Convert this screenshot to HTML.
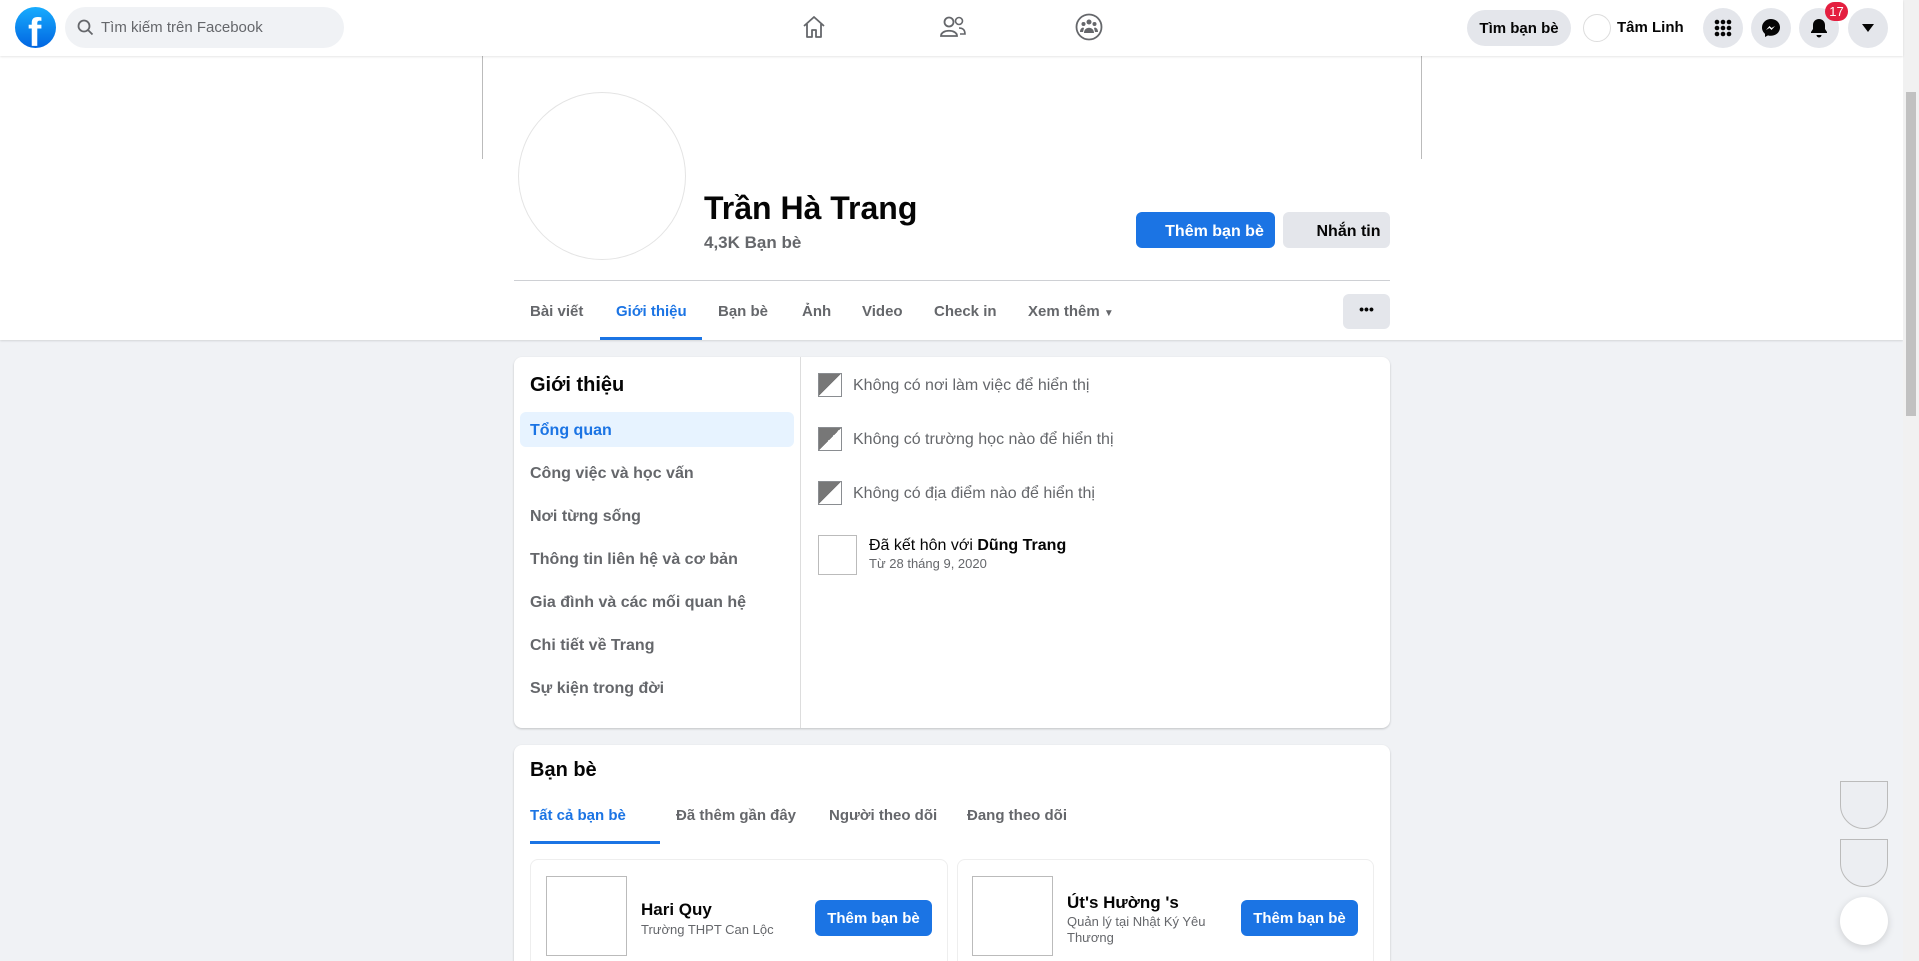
<!DOCTYPE html>
<html style="overflow:hidden;height:961px"><head><meta charset="utf-8"><style>
*{box-sizing:border-box;margin:0;padding:0}
html{overflow:hidden;height:961px}
body{width:1919px;height:961px;overflow:hidden;background:#f0f2f5;font-family:"Liberation Sans",Arial,sans-serif;position:relative;color:#050505}
.a{position:absolute}
.top{left:0;top:0;width:1903px;height:56px;background:#fff;box-shadow:0 1px 2px rgba(0,0,0,.1);z-index:5}
.hdr{left:0;top:56px;width:1903px;height:284px;background:#fff;box-shadow:0 1px 2px rgba(0,0,0,.12)}
.circ{width:40px;height:40px;border-radius:50%;background:#e4e6eb;display:flex;align-items:center;justify-content:center}
.tab{top:298px;font-size:15px;font-weight:bold;color:#65676b}
.card{background:#fff;border-radius:8px;box-shadow:0 1px 2px rgba(0,0,0,.2)}
.mi{left:530px;font-size:16px;font-weight:bold;color:#65676b}
.ri{left:853px;font-size:16px;color:#65676b}
.bi{width:24px;height:24px;border:1px solid #8a8d91;background:linear-gradient(135deg,#777 0 50%,#fff 50%)}
.btn{background:#1b74e4;color:#fff;font-weight:bold;font-size:16px;border-radius:6px;display:flex;align-items:center;justify-content:center}
.brk{border:1px solid #bbb;background:#fff}
</style></head><body>
<div class="a top">
 <div class="a" style="left:15px;top:7px;width:41px;height:41px;border-radius:50%;background:linear-gradient(#18acfe,#0165e1);overflow:hidden"><span class="a" style="left:13px;top:6px;color:#fff;font-size:40px;font-weight:bold;font-family:'Liberation Sans';line-height:40px">f</span></div>
 <div class="a" style="left:65px;top:7px;width:279px;height:41px;border-radius:21px;background:#f0f2f5">
  <svg class="a" style="left:12px;top:12px" width="17" height="17" viewBox="0 0 17 17"><circle cx="7" cy="7" r="5.5" fill="none" stroke="#65676b" stroke-width="1.8"/><line x1="11" y1="11" x2="15.5" y2="15.5" stroke="#65676b" stroke-width="1.8"/></svg>
  <span class="a" style="left:36px;top:12px;font-size:15px;color:#65676b">Tìm kiếm trên Facebook</span></div>
 <svg class="a" style="left:801px;top:14px" width="26" height="26" viewBox="0 0 26 26"><path d="M3 12 L13 3 L23 12 M6 10 V23 H11 V16 H15 V23 H20 V10" fill="none" stroke="#65676b" stroke-width="1.8" stroke-linejoin="round"/></svg>
 <svg class="a" style="left:939px;top:14px" width="28" height="26" viewBox="0 0 28 26"><circle cx="10" cy="8" r="4.5" fill="none" stroke="#65676b" stroke-width="1.8"/><path d="M2 22 C2 15 18 15 18 22 Z" fill="none" stroke="#65676b" stroke-width="1.8"/><circle cx="20" cy="7" r="3.5" fill="none" stroke="#65676b" stroke-width="1.6"/><path d="M20 14 C24 14 26 16 26 20 H21" fill="none" stroke="#65676b" stroke-width="1.6"/></svg>
 <svg class="a" style="left:1075px;top:13px" width="28" height="28" viewBox="0 0 28 28"><circle cx="14" cy="14" r="12.5" fill="none" stroke="#65676b" stroke-width="1.8"/><circle cx="14" cy="9" r="2.5" fill="#65676b"/><circle cx="8.5" cy="11" r="2" fill="#65676b"/><circle cx="19.5" cy="11" r="2" fill="#65676b"/><path d="M9 20 C9 13 19 13 19 20 Z M5 19 C5 15 8 14 9 15 L8 19Z M23 19 C23 15 20 14 19 15 L20 19Z" fill="#65676b"/></svg>
 <div class="a" style="left:1467px;top:10px;width:104px;height:36px;border-radius:18px;background:#e4e6eb;font-size:15px;font-weight:bold;display:flex;align-items:center;justify-content:center">Tìm bạn bè</div>
 <div class="a" style="left:1583px;top:14px;width:28px;height:28px;border-radius:50%;border:1px solid #ddd"></div>
 <span class="a" style="left:1617px;top:19px;font-size:15px;font-weight:bold">Tâm Linh</span>
 <div class="a circ" style="left:1703px;top:8px"><svg width="20" height="20" viewBox="0 0 20 20" fill="#050505"><circle cx="4" cy="4" r="2.3"/><circle cx="10" cy="4" r="2.3"/><circle cx="16" cy="4" r="2.3"/><circle cx="4" cy="10" r="2.3"/><circle cx="10" cy="10" r="2.3"/><circle cx="16" cy="10" r="2.3"/><circle cx="4" cy="16" r="2.3"/><circle cx="10" cy="16" r="2.3"/><circle cx="16" cy="16" r="2.3"/></svg></div>
 <div class="a circ" style="left:1751px;top:8px"><svg width="20" height="20" viewBox="0 0 20 20"><path d="M10 1C5 1 1 4.7 1 9.5c0 2.6 1.2 4.8 3 6.3V19l3-1.6c.9.3 1.9.4 3 .4 5 0 9-3.7 9-8.4S15 1 10 1z" fill="#050505"/><path d="M5 12l3.5-4 2 2 3.5-2-3.5 4-2-2z" fill="#fff"/></svg></div>
 <div class="a circ" style="left:1799px;top:8px"><svg width="18" height="20" viewBox="0 0 18 20"><path d="M9 1c-3.5 0-6 2.6-6 6v4l-2 3v1h16v-1l-2-3V7c0-3.4-2.5-6-6-6z M6.5 17h5a2.5 2.5 0 01-5 0z" fill="#050505"/></svg></div>
 <div class="a" style="left:1825px;top:2px;min-width:23px;height:19px;border-radius:10px;background:#e41e3f;color:#fff;font-size:13px;text-align:center;line-height:19px;padding:0 4px">17</div>
 <div class="a circ" style="left:1848px;top:8px"><svg width="12" height="8" viewBox="0 0 12 8"><path d="M0 0h12L6 8z" fill="#050505"/></svg></div>
</div>
<div class="a hdr">
 <div class="a" style="left:482px;top:0;width:1px;height:103px;background:#bbb"></div>
 <div class="a" style="left:1421px;top:0;width:1px;height:103px;background:#bbb"></div>
 <div class="a" style="left:518px;top:36px;width:168px;height:168px;border-radius:50%;border:1px solid #e4e4e4;background:#fff"></div>
 <div class="a" style="left:704px;top:134px;font-size:32px;font-weight:bold">Trần Hà Trang</div>
 <div class="a" style="left:704px;top:177px;font-size:17px;font-weight:bold;color:#65676b">4,3K Bạn bè</div>
 <div class="a btn" style="left:1136px;top:156px;width:139px;height:36px;padding-left:18px;padding-top:3px">Thêm bạn bè</div>
 <div class="a" style="left:1283px;top:156px;width:107px;height:36px;border-radius:6px;background:#e4e6eb;font-size:16px;font-weight:bold;display:flex;align-items:center;justify-content:center;padding-left:24px;padding-top:3px">Nhắn tin</div>
 <div class="a" style="left:514px;top:224px;width:876px;height:1px;background:#ced0d4"></div>
 <span class="a tab" style="left:530px;top:247px">Bài viết</span>
 <span class="a tab" style="left:616px;top:247px;color:#1b74e4">Giới thiệu</span>
 <div class="a" style="left:600px;top:281px;width:102px;height:3px;background:#1b74e4"></div>
 <span class="a tab" style="left:718px;top:247px">Bạn bè</span>
 <span class="a tab" style="left:802px;top:247px">Ảnh</span>
 <span class="a tab" style="left:862px;top:247px">Video</span>
 <span class="a tab" style="left:934px;top:247px">Check in</span>
 <span class="a tab" style="left:1028px;top:247px">Xem thêm <span style="font-size:10px">▼</span></span>
 <div class="a" style="left:1343px;top:238px;width:47px;height:35px;border-radius:6px;background:#e4e6eb;text-align:center;font-weight:bold;font-size:14px;line-height:30px">•••</div>
</div>
<div class="a card" style="left:514px;top:357px;width:876px;height:371px">
 <div class="a" style="left:286px;top:0;width:1px;height:371px;background:#ddd"></div>
 <div class="a" style="left:16px;top:17px;font-size:20px;font-weight:bold">Giới thiệu</div>
 <div class="a" style="left:6px;top:55px;width:274px;height:35px;border-radius:6px;background:#e7f3ff"></div>
</div>
<div class="a mi" style="top:422px;color:#1b74e4">Tổng quan</div>
<div class="a mi" style="top:465px">Công việc và học vấn</div>
<div class="a mi" style="top:508px">Nơi từng sống</div>
<div class="a mi" style="top:551px">Thông tin liên hệ và cơ bản</div>
<div class="a mi" style="top:594px">Gia đình và các mối quan hệ</div>
<div class="a mi" style="top:637px">Chi tiết về Trang</div>
<div class="a mi" style="top:680px">Sự kiện trong đời</div>
<div class="a bi" style="left:818px;top:373px"></div><div class="a ri" style="top:377px">Không có nơi làm việc để hiển thị</div>
<div class="a bi" style="left:818px;top:427px"></div><div class="a ri" style="top:431px">Không có trường học nào để hiển thị</div>
<div class="a bi" style="left:818px;top:481px"></div><div class="a ri" style="top:485px">Không có địa điểm nào để hiển thị</div>
<div class="a brk" style="left:818px;top:535px;width:39px;height:40px"></div>
<div class="a" style="left:869px;top:537px;font-size:16px">Đã kết hôn với <b>Dũng Trang</b></div>
<div class="a" style="left:869px;top:556px;font-size:13px;color:#65676b">Từ 28 tháng 9, 2020</div>
<div class="a card" style="left:514px;top:745px;width:876px;height:240px">
 <div class="a" style="left:16px;top:14px;font-size:20px;font-weight:bold">Bạn bè</div>
 <div class="a tab" style="left:16px;top:62px;color:#1b74e4">Tất cả bạn bè</div>
 <div class="a tab" style="left:162px;top:62px">Đã thêm gần đây</div>
 <div class="a tab" style="left:315px;top:62px">Người theo dõi</div>
 <div class="a tab" style="left:453px;top:62px">Đang theo dõi</div>
 <div class="a" style="left:16px;top:96px;width:130px;height:3px;background:#1b74e4"></div>
 <div class="a" style="left:16px;top:114px;width:418px;height:140px;border:1px solid #eee;border-radius:8px"></div>
 <div class="a" style="left:443px;top:114px;width:417px;height:140px;border:1px solid #eee;border-radius:8px"></div>
</div>
<div class="a brk" style="left:546px;top:876px;width:81px;height:80px"></div>
<div class="a" style="left:641px;top:900px;font-size:17px;font-weight:bold">Hari Quy</div>
<div class="a" style="left:641px;top:922px;font-size:13px;color:#65676b">Trường THPT Can Lộc</div>
<div class="a btn" style="left:815px;top:900px;width:117px;height:36px;font-size:15px">Thêm bạn bè</div>
<div class="a brk" style="left:972px;top:876px;width:81px;height:80px"></div>
<div class="a" style="left:1067px;top:893px;font-size:17px;font-weight:bold">Út's Hường 's</div>
<div class="a" style="left:1067px;top:914px;font-size:13px;color:#65676b;width:150px;line-height:16px">Quản lý tại Nhật Ký Yêu Thương</div>
<div class="a btn" style="left:1241px;top:900px;width:117px;height:36px;font-size:15px">Thêm bạn bè</div>
<div class="a brk" style="left:1840px;top:781px;width:48px;height:48px;background:#eceef2;border-radius:0 0 24px 24px"></div>
<div class="a brk" style="left:1840px;top:839px;width:48px;height:48px;background:#eceef2;border-radius:0 0 24px 24px"></div>
<div class="a" style="left:1840px;top:897px;width:48px;height:48px;border-radius:50%;background:#fff;box-shadow:0 2px 8px rgba(0,0,0,.15)"></div>
<div class="a" style="left:1903px;top:0;width:16px;height:961px;background:#f1f1f1"></div>
<div class="a" style="left:1906px;top:92px;width:10px;height:324px;background:#c1c1c1"></div>
</body></html>
